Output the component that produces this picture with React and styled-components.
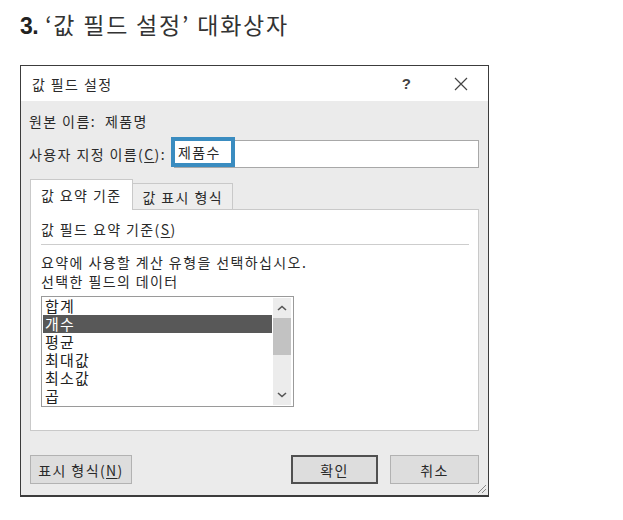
import React from "react";
import styled, { createGlobalStyle } from "styled-components";

const GlobalStyle = createGlobalStyle`
  body {
    margin: 0;
    background: #ffffff;
    font-family: "Noto Sans CJK KR", "Noto Sans", sans-serif;
    color: #2a2a2a;
  }
`;

const Page = styled.div`
  width: 623px;
  height: 520px;
  padding: 9px 0 0 20px;
  box-sizing: border-box;
`;

const Heading = styled.h1`
  margin: 0;
  font-size: 23px;
  font-weight: 400;
  line-height: 30px;
  color: #333;
  letter-spacing: 1.8px;
  b {
    font-family: "Liberation Sans", sans-serif;
    font-weight: 700;
    color: #222;
    letter-spacing: -0.5px;
  }
`;

const Dialog = styled.div`
  margin-top: 24px;
  width: 469px;
  height: 432px;
  box-sizing: border-box;
  border: 1px solid #3c3c3c;
  border-bottom-width: 2px;
  background: #ebebeb;
  display: flex;
  flex-direction: column;
  position: relative;
  font-size: 14px;
  letter-spacing: 1.4px;
`;

const TitleBar = styled.div`
  height: 35px;
  background: #fff;
  display: flex;
  align-items: center;
  padding-left: 11px;
  font-size: 14px;
`;

const TitleText = styled.span`
  flex: 1;
`;

const TitleButton = styled.span`
  width: 54px;
  display: flex;
  justify-content: center;
  font-family: "Liberation Sans", sans-serif;
  font-size: 15px;
  font-weight: ${(p) => (p.$bold ? 700 : 400)};
  color: #444;
`;

const Body = styled.div`
  flex: 1;
  display: flex;
  flex-direction: column;
  padding: 0 9px 0 8px;
`;

const Row = styled.div`
  display: flex;
  align-items: center;
  height: ${(p) => p.$h || 26}px;
  margin-top: ${(p) => p.$mt || 0}px;
  white-space: pre;
`;

const Field = styled.div`
  flex: 1;
  height: 26px;
  margin-left: 8px;
  background: #fff;
  border: 1px solid #a8a8a8;
  display: flex;
  align-items: center;
  position: relative;
`;

const Highlight = styled.span`
  position: absolute;
  left: -4px;
  top: -4px;
  width: 53px;
  height: 22px;
  border: 4px solid #3a8cc0;
  background: #fff;
  display: flex;
  align-items: center;
  padding-left: 3px;
  font-size: 14px;
`;

const Tabs = styled.div`
  display: flex;
  align-items: flex-end;
  margin-top: 11px;
  height: 31px;
  padding-left: 1px;
  position: relative;
  z-index: 1;
`;

const Tab = styled.div`
  height: ${(p) => (p.$active ? 31 : 27)}px;
  padding: 0 ${(p) => (p.$active ? "11px 0 10px" : "9px 0 9px")};
  display: flex;
  align-items: center;
  box-sizing: border-box;
  border: 1px solid #c9c9c9;
  border-bottom: ${(p) => (p.$active ? "none" : "1px solid #c9c9c9")};
  margin-left: ${(p) => (p.$active ? 0 : -1)}px;
  background: ${(p) => (p.$active ? "#fff" : "#ededed")};
  white-space: pre;
`;

const Panel = styled.div`
  height: 222px;
  box-sizing: border-box;
  margin-left: 1px;
  margin-top: -1px;
  background: #fff;
  border: 1px solid #c9c9c9;
  padding: 9px 9px 0 10px;
  display: flex;
  flex-direction: column;
`;

const Label = styled.div`
  line-height: ${(p) => p.$lh || 19}px;
  white-space: pre;
`;

const Separator = styled.div`
  height: 1px;
  background: #cdcdcd;
  margin: 5px 0 8px;
`;

const List = styled.div`
  margin-top: 5px;
  width: 253px;
  height: 111px;
  box-sizing: border-box;
  border: 1px solid #9a9a9a;
  display: flex;
  padding: 0 1px;
`;

const Items = styled.div`
  flex: 1;
  font-size: 15px;
  letter-spacing: 1.2px;
`;

const Item = styled.div`
  height: 18px;
  line-height: 18px;
  padding-left: 2px;
  background: ${(p) => (p.$selected ? "#585858" : "transparent")};
  color: ${(p) => (p.$selected ? "#fff" : "#222")};
`;

const Scroll = styled.div`
  width: 18px;
  margin: 1px;
  background: #ececec;
  display: flex;
  flex-direction: column;
  align-items: center;
`;

const Arrow = styled.div`
  height: 20px;
  display: flex;
  align-items: center;
  justify-content: center;
`;

const Thumb = styled.div`
  width: 18px;
  height: 37px;
  background: #c2c2c2;
`;

const Spacer = styled.div`
  flex: 1;
`;

const Buttons = styled.div`
  display: flex;
  margin-top: 24px;
  padding-left: 1px;
  align-items: center;
`;

const Button = styled.div`
  width: ${(p) => p.$w}px;
  height: 29px;
  box-sizing: border-box;
  display: flex;
  align-items: center;
  justify-content: center;
  background: #dddddd;
  border: ${(p) => (p.$default ? "2px solid #505050" : "1px solid #b2b2b2")};
  margin-left: ${(p) => p.$ml || 0}px;
  white-space: pre;
`;

const Grip = styled.svg`
  position: absolute;
  right: 1px;
  bottom: 1px;
`;

const U = styled.span`
  text-decoration: underline;
  text-underline-offset: 2px;
`;

const items = ["합계", "개수", "평균", "최대값", "최소값", "곱"];

export default function App() {
  return (
    <>
      <GlobalStyle />
      <Page>
        <Heading>
          <b>3.</b> ‘값 필드 설정’ 대화상자
        </Heading>
        <Dialog>
          <TitleBar>
            <TitleText>값 필드 설정</TitleText>
            <TitleButton $bold>?</TitleButton>
            <TitleButton>
              <svg width="14" height="14" viewBox="0 0 14 14">
                <path d="M1 1 L13 13 M13 1 L1 13" stroke="#444" strokeWidth="1.2" />
              </svg>
            </TitleButton>
          </TitleBar>
          <Body>
            <Row $mt={8} $h={24}>
              원본 이름:  제품명
            </Row>
            <Row $mt={7} $h={28}>
              사용자 지정 이름(<U>C</U>):
              <Field>
                <Highlight>제품수</Highlight>
              </Field>
            </Row>
            <Tabs>
              <Tab $active>값 요약 기준</Tab>
              <Tab>값 표시 형식</Tab>
            </Tabs>
            <Panel>
              <Label $lh={20}>
                값 필드 요약 기준(<U>S</U>)
              </Label>
              <Separator />
              <Label>요약에 사용할 계산 유형을 선택하십시오.</Label>
              <Label>선택한 필드의 데이터</Label>
              <List>
                <Items>
                  {items.map((t, i) => (
                    <Item key={t} $selected={i === 1}>
                      {t}
                    </Item>
                  ))}
                </Items>
                <Scroll>
                  <Arrow>
                    <svg width="10" height="6" viewBox="0 0 10 6">
                      <path d="M1 5 L5 1.5 L9 5" fill="none" stroke="#555" strokeWidth="1.6" />
                    </svg>
                  </Arrow>
                  <Thumb />
                  <Spacer />
                  <Arrow>
                    <svg width="10" height="6" viewBox="0 0 10 6">
                      <path d="M1 1 L5 4.5 L9 1" fill="none" stroke="#555" strokeWidth="1.6" />
                    </svg>
                  </Arrow>
                </Scroll>
              </List>
            </Panel>
            <Buttons>
              <Button $w={102}>
                표시 형식(<U>N</U>)
              </Button>
              <Spacer />
              <Button $w={87} $default>
                확인
              </Button>
              <Button $w={89} $ml={12}>
                취소
              </Button>
            </Buttons>
          </Body>
          <Grip width="12" height="12" viewBox="0 0 12 12">
            <path d="M11 3 L3 11 M11 7 L7 11" stroke="#888" strokeWidth="1" />
          </Grip>
        </Dialog>
      </Page>
    </>
  );
}
